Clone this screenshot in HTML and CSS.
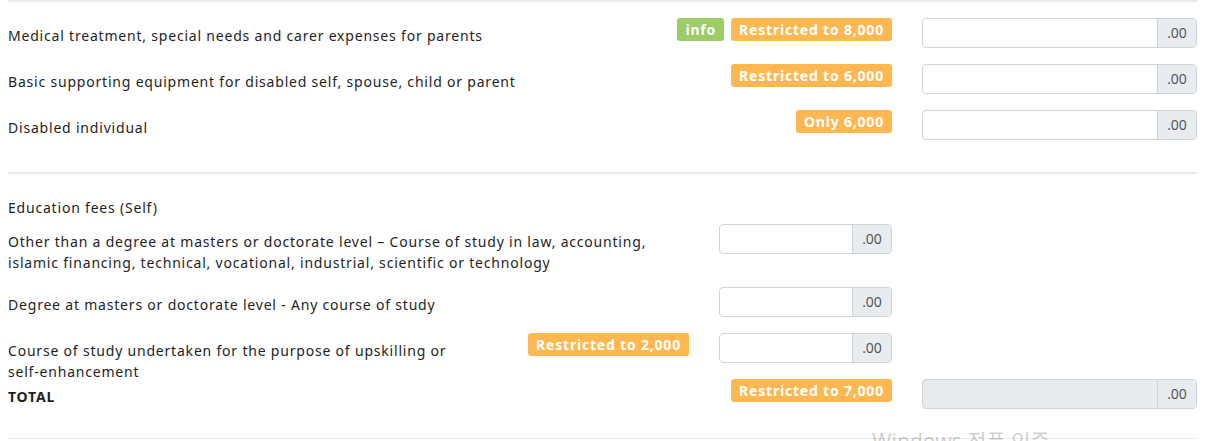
FILE: index.html
```html
<!DOCTYPE html>
<html lang="en">
<head>
<meta charset="utf-8">
<title>Reliefs</title>
<link rel="stylesheet" href="styles.css">
</head>
<body>
<div class="page">
  <section class="section first">
    <div class="row-main">
      <div class="left">
        <div class="label">Medical treatment, special needs and carer expenses for parents</div>
        <div class="badges"><span class="badge green">info</span><span class="badge orange">Restricted to 8,000</span></div>
      </div>
      <div class="igroup"><div class="field"></div><div class="addon">.00</div></div>
    </div>
    <div class="row-main">
      <div class="left">
        <div class="label">Basic supporting equipment for disabled self, spouse, child or parent</div>
        <div class="badges"><span class="badge orange">Restricted to 6,000</span></div>
      </div>
      <div class="igroup"><div class="field"></div><div class="addon">.00</div></div>
    </div>
    <div class="row-main">
      <div class="left">
        <div class="label">Disabled individual</div>
        <div class="badges"><span class="badge orange">Only 6,000</span></div>
      </div>
      <div class="igroup"><div class="field"></div><div class="addon">.00</div></div>
    </div>
  </section>

  <section class="section second">
    <div class="heading label">Education fees (Self)</div>
    <div class="row-edu tall">
      <div class="label span2">Other than a degree at masters or doctorate level – Course of study in law, accounting, islamic financing, technical, vocational, industrial, scientific or technology</div>
      <div class="igroup"><div class="field"></div><div class="addon">.00</div></div>
    </div>
    <div class="row-edu">
      <div class="label span2">Degree at masters or doctorate level - Any course of study</div>
      <div class="igroup"><div class="field"></div><div class="addon">.00</div></div>
    </div>
    <div class="row-edu">
      <div class="label">Course of study undertaken for the purpose of upskilling or <span class="nowrap">self-enhancement</span></div>
      <div class="badges"><span class="badge orange">Restricted to 2,000</span></div>
      <div class="igroup"><div class="field"></div><div class="addon">.00</div></div>
    </div>
    <div class="row-main">
      <div class="left">
        <div class="label total">TOTAL</div>
        <div class="badges"><span class="badge orange">Restricted to 7,000</span></div>
      </div>
      <div class="igroup disabled"><div class="field"></div><div class="addon">.00</div></div>
    </div>
  </section>
</div>
<div class="watermark">Windows 정품 인증</div>
</body>
</html>
```
FILE: styles.css
```css
html, body {
  margin: 0;
  padding: 0;
  background: #ffffff;
}
body {
  font-family: "Noto Sans", "Noto Sans CJK KR", sans-serif;
  font-size: 14px;
  color: #1e1e1e;
  position: relative;
  height: 441px;
  overflow: hidden;
}
.page {
  padding: 0 14px 0 8px;
}
.section {
  border-top: 2px solid #e9ecef;
}
.section.first {
  padding: 16px 0 32px;
}
.section.second {
  padding: 16px 0 29px;
  border-bottom: 1px solid #e9ecef;
}
.row-main {
  display: grid;
  grid-template-columns: 1fr 275px;
  column-gap: 30px;
  height: 30px;
  margin-bottom: 16px;
}
.row-main:last-child {
  margin-bottom: 0;
}
.left {
  display: flex;
  justify-content: space-between;
  align-items: flex-start;
}
.label {
  padding-top: 7px;
  line-height: 21px;
  letter-spacing: 0.8px;
}
.label.total {
  font-weight: 700;
}
.nowrap {
  white-space: nowrap;
}
.heading {
  height: 27px;
}
.row-edu {
  display: grid;
  grid-template-columns: 478px 173px 173px;
  column-gap: 30px;
  height: 30px;
  margin-bottom: 16px;
}
.row-edu.tall {
  height: 47px;
}
.span2 {
  grid-column: span 2;
}
.badges {
  display: flex;
  justify-content: flex-end;
  align-items: flex-start;
  gap: 7px;
}
.badge {
  display: inline-block;
  height: 22px;
  line-height: 22px;
  padding: 1px 8px 0;
  border-radius: 3px;
  color: #ffffff;
  font-weight: 700;
  font-size: 14px;
  letter-spacing: 0.8px;
  white-space: nowrap;
}
.badge.orange {
  background: #ffb752;
}
.badge.green {
  background: #9ccc65;
}
.igroup {
  display: flex;
  height: 30px;
  box-sizing: border-box;
  border: 1px solid #ced4da;
  border-radius: 4px;
  overflow: hidden;
  background: #ffffff;
}
.igroup.disabled {
  background: #e9ecef;
}
.field {
  flex: 1;
}
.addon {
  width: 38px;
  border-left: 1px solid #ced4da;
  background: #e9ecef;
  color: #495057;
  font-family: "Open Sans", sans-serif;
  font-size: 14px;
  line-height: 28px;
  text-align: center;
}
.watermark {
  position: absolute;
  left: 872px;
  top: 425px;
  font-family: "Noto Sans", "Noto Sans CJK KR", sans-serif;
  font-size: 21px;
  color: rgba(0, 0, 0, 0.2);
  white-space: nowrap;
}
```
